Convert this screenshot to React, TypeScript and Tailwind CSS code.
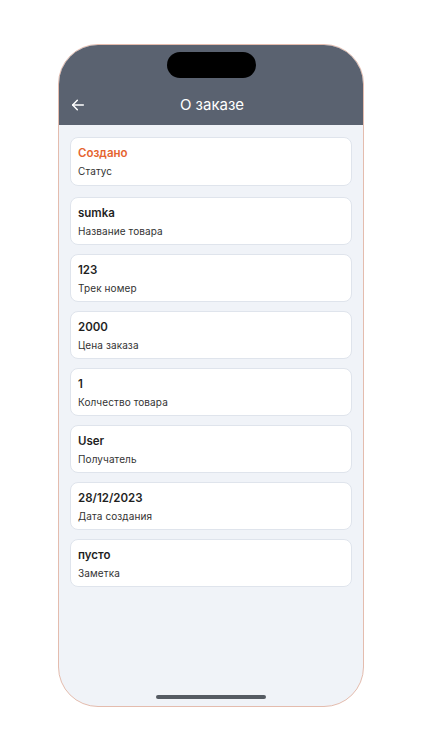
import React from 'react';

const rows = [
    { value: 'Создано', label: 'Статус', accent: true },
    { value: 'sumka', label: 'Название товара' },
    { value: '123', label: 'Трек номер' },
    { value: '2000', label: 'Цена заказа' },
    { value: '1', label: 'Колчество товара' },
    { value: 'User', label: 'Получатель' },
    { value: '28/12/2023', label: 'Дата создания' },
    { value: 'пусто', label: 'Заметка' },
];

export default function App() {
    return (
        <div className="w-[422px] h-[750px] bg-white pt-[44px] pl-[58px]" style={{ fontFamily: 'Inter, "Noto Sans", sans-serif' }}>
            <div className="w-[306px] h-[663px] rounded-[40px] border border-[#e4bcae] overflow-hidden flex flex-col bg-[#f0f3f8] relative">
                {/* header */}
                <div className="h-[80px] bg-[#5a6270] flex flex-col items-center shrink-0">
                    <div className="mt-[7px] w-[89px] h-[26px] rounded-full bg-black" />
                    <div className="relative w-full mt-[13px] h-[28px] flex items-center justify-center">
                        <svg className="absolute left-[11px] top-[6px]" width="16" height="16" viewBox="0 0 24 24" fill="none" stroke="white" strokeWidth="2.2" strokeLinecap="round" strokeLinejoin="round">
                            <path d="M20 12H4" />
                            <path d="M11 5l-7 7 7 7" />
                        </svg>
                        <span className="text-white text-[15px] ml-[2px]">О заказе</span>
                    </div>
                </div>

                {/* list */}
                <div className="flex flex-col gap-[9px] px-[11px] pt-[12px]">
                    {rows.map((r, i) => (
                        <div key={i} className={`bg-white rounded-[8px] border-[1.5px] border-[#dfe4ec] px-[7px] pt-[7px] ${i === 0 ? 'mb-[2px] h-[49px]' : 'h-[48px]'}`}>
                            <div className={`text-[11.5px] font-semibold leading-[16px] ${r.accent ? 'text-[#e5642f]' : 'text-[#1f1f1f]'}`}>{r.value}</div>
                            <div className="text-[10px] leading-[14px] mt-[3px] text-[#333] tracking-[0.1px]">{r.label}</div>
                        </div>
                    ))}
                </div>

                <div className="absolute bottom-[7px] left-[97px] w-[110px] h-[4px] rounded-full bg-[#555b63]" />
            </div>
        </div>
    );
}
